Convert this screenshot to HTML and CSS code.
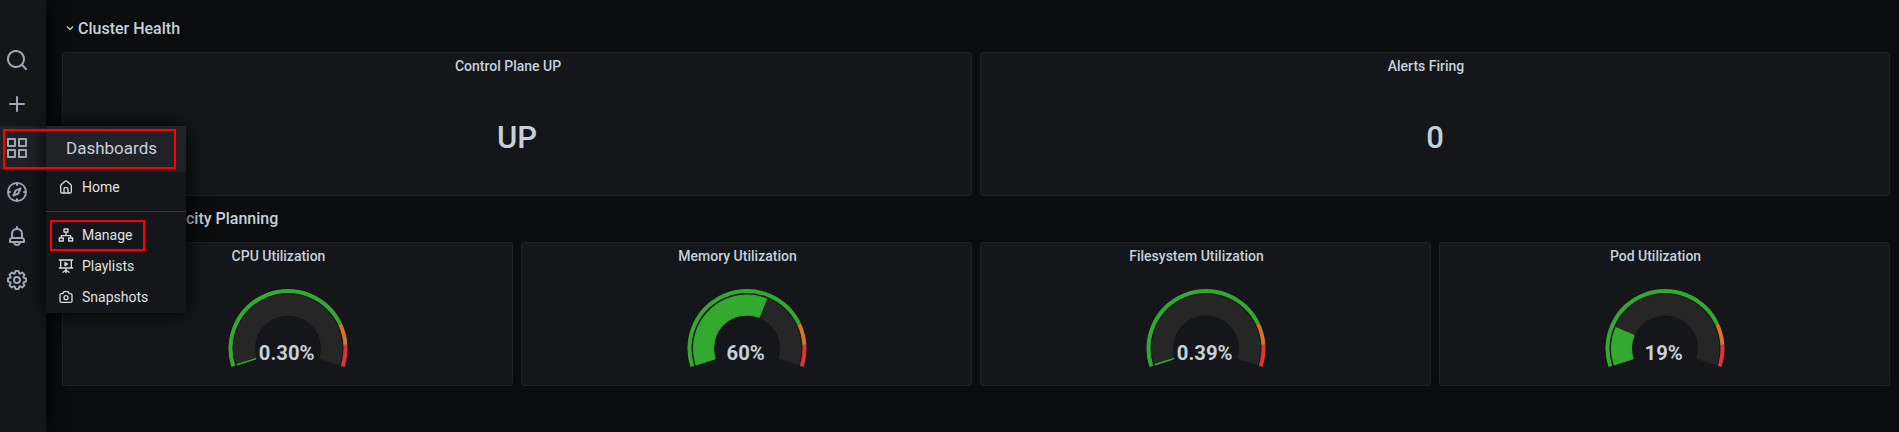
FILE: index.html
```html
<!DOCTYPE html>
<html lang="en">
<head>
<meta charset="utf-8">
<title>Cluster Health</title>
<link rel="stylesheet" href="styles.css">
</head>
<body>
<div class="app">
  <nav class="sidemenu">
    <a class="nav-item"><svg class="nav-icon" viewBox="0 0 24 24"><path d="M21.71,20.29,18,16.61A9,9,0,1,0,16.61,18l3.68,3.68a1,1,0,0,0,1.42,0A1,1,0,0,0,21.71,20.29ZM11,18a7,7,0,1,1,7-7A7,7,0,0,1,11,18Z"/></svg></a>
    <a class="nav-item"><svg class="nav-icon" viewBox="0 0 24 24"><path d="M19,11H13V5a1,1,0,0,0-2,0v6H5a1,1,0,0,0,0,2h6v6a1,1,0,0,0,2,0V13h6a1,1,0,0,0,0-2Z"/></svg></a>
    <div class="nav-item nav-item-open">
      <svg class="nav-icon" viewBox="0 0 24 24"><path d="M10,13H3a1,1,0,0,0-1,1v7a1,1,0,0,0,1,1h7a1,1,0,0,0,1-1V14A1,1,0,0,0,10,13ZM9,20H4V15H9ZM21,2H14a1,1,0,0,0-1,1v7a1,1,0,0,0,1,1h7a1,1,0,0,0,1-1V3A1,1,0,0,0,21,2ZM20,9H15V4h5Zm1,4H14a1,1,0,0,0-1,1v7a1,1,0,0,0,1,1h7a1,1,0,0,0,1-1V14A1,1,0,0,0,21,13Zm-1,7H15V15h5ZM10,2H3A1,1,0,0,0,2,3v7a1,1,0,0,0,1,1h7a1,1,0,0,0,1-1V3A1,1,0,0,0,10,2ZM9,9H4V4H9Z"/></svg>
      <div class="menu">
        <div class="menu-header">Dashboards</div>
        <a class="menu-item"><svg class="menu-icon" viewBox="0 0 24 24"><path d="M20,8h0L14,2.74a3,3,0,0,0-4,0L4,8a3,3,0,0,0-1,2.26V19a3,3,0,0,0,3,3H18a3,3,0,0,0,3-3V10.25A3,3,0,0,0,20,8ZM14,20H10V15a1,1,0,0,1,1-1h2a1,1,0,0,1,1,1Zm5-1a1,1,0,0,1-1,1H16V15a3,3,0,0,0-3-3H11a3,3,0,0,0-3,3v5H6a1,1,0,0,1-1-1V10.25a1,1,0,0,1,.34-.75l6-5.25a1,1,0,0,1,1.32,0l6,5.25a1,1,0,0,1,.34.75Z"/></svg>Home</a>
        <div class="menu-divider"></div>
        <a class="menu-item"><svg class="menu-icon menu-icon-line" viewBox="0 0 24 24"><path d="M9 3h6v4.500H9zM2 16.500h6V21H2zM16 16.500h6V21h-6zM12 7.500V13M5 16.500V13h14v3.500"/></svg>Manage<span class="mark mark-manage"></span></a>
        <a class="menu-item"><svg class="menu-icon menu-icon-line" viewBox="0 0 24 24"><path d="M2 3h20M4 3v12h16V3M2 15h20M12 15v7M12 18l-4.500 3.500M12 18l4.500 3.500M10.500 7v4.500l3.500-2.250z"/></svg>Playlists</a>
        <a class="menu-item"><svg class="menu-icon menu-icon-line" viewBox="0 0 24 24"><path d="M5 7h2.300l1-2.400a1 1 0 0 1 1-.6h5.400a1 1 0 0 1 1 .6l1 2.400H19a2 2 0 0 1 2 2v9a2 2 0 0 1-2 2H5a2 2 0 0 1-2-2V9a2 2 0 0 1 2-2z"/><circle cx="12" cy="13" r="3"/></svg>Snapshots</a>
      </div>
      <span class="mark mark-dashboards"></span>
    </div>
    <a class="nav-item"><svg class="nav-icon" viewBox="0 0 24 24"><path d="M12,2A10,10,0,1,0,22,12,10,10,0,0,0,12,2Zm1,17.930V19a1,1,0,0,0-2,0v.93A8,8,0,0,1,4.070,13H5a1,1,0,0,0,0-2H4.070A8,8,0,0,1,11,4.070V5a1,1,0,0,0,2,0V4.070A8,8,0,0,1,19.930,11H19a1,1,0,0,0,0,2h.93A8,8,0,0,1,13,19.930ZM15.140,7.550l-5,2.120a1,1,0,0,0-.52.52l-2.120,5a1,1,0,0,0,.21,1.100,1,1,0,0,0,.7.3.93.93,0,0,0,.4-.09l5-2.120a1,1,0,0,0,.52-.52l2.120-5a1,1,0,0,0-1.310-1.310Zm-2.490,5.100-2.280,1,1-2.280,2.280-1Z"/></svg></a>
    <a class="nav-item"><svg class="nav-icon" viewBox="0 0 24 24"><path d="M18,13.180V10a6,6,0,0,0-5-5.910V3a1,1,0,0,0-2,0V4.090A6,6,0,0,0,6,10v3.180A3,3,0,0,0,4,16v2a1,1,0,0,0,1,1H8.140a4,4,0,0,0,7.720,0H19a1,1,0,0,0,1-1V16A3,3,0,0,0,18,13.180ZM8,10a4,4,0,0,1,8,0v3H8Zm4,10a2,2,0,0,1-1.720-1h3.440A2,2,0,0,1,12,20Zm6-3H6V16a1,1,0,0,1,1-1H17a1,1,0,0,1,1,1Z"/></svg></a>
    <a class="nav-item"><svg class="nav-icon" viewBox="0 0 24 24"><path d="M21.320,9.550l-1.890-.63.89-1.780A1,1,0,0,0,20.130,6L18,3.870a1,1,0,0,0-1.150-.19l-1.780.89-.63-1.890A1,1,0,0,0,13.500,2h-3a1,1,0,0,0-.95.68L8.920,4.570,7.140,3.680A1,1,0,0,0,6,3.870L3.870,6a1,1,0,0,0-.19,1.150l.89,1.780-1.890.63A1,1,0,0,0,2,10.500v3a1,1,0,0,0,.68.95l1.890.63-.89,1.780A1,1,0,0,0,3.870,18L6,20.130a1,1,0,0,0,1.150.19l1.780-.89.63,1.890a1,1,0,0,0,.95.68h3a1,1,0,0,0,.95-.68l.63-1.890,1.780.89A1,1,0,0,0,18,20.130L20.130,18a1,1,0,0,0,.19-1.150l-.89-1.780,1.890-.63A1,1,0,0,0,22,13.500v-3A1,1,0,0,0,21.320,9.550ZM20,12.780l-1.200.4A2,2,0,0,0,17.640,16l.57,1.140-1.100,1.100L16,17.640a2,2,0,0,0-2.790,1.160l-.4,1.200H11.220l-.4-1.200A2,2,0,0,0,8,17.640l-1.140.57-1.100-1.100L6.360,16A2,2,0,0,0,5.200,13.180L4,12.780V11.220l1.200-.4A2,2,0,0,0,6.360,8L5.790,6.890l1.100-1.100L8,6.360A2,2,0,0,0,10.820,5.200l.4-1.200h1.560l.4,1.200A2,2,0,0,0,16,6.360l1.140-.57,1.100,1.100L17.640,8a2,2,0,0,0,1.160,2.790l1.200.4ZM12,8a4,4,0,1,0,4,4A4,4,0,0,0,12,8Zm0,6a2,2,0,1,1,2-2A2,2,0,0,1,12,14Z"/></svg></a>
  </nav>
  <main class="dashboard">
    <h2 class="row-title"><svg class="caret" viewBox="0 0 8 8"><path d="M1 2.500l3 3 3-3"/></svg>Cluster Health</h2>
    <div class="panels panels-stats">
      <section class="panel"><h3 class="panel-title">Control Plane UP</h3><div class="stat">UP</div></section>
      <section class="panel"><h3 class="panel-title">Alerts Firing</h3><div class="stat">0</div></section>
    </div>
    <h2 class="row-title"><svg class="caret" viewBox="0 0 8 8"><path d="M1 2.500l3 3 3-3"/></svg>Resource Capacity Planning</h2>
    <div class="panels panels-gauges">
      <section class="panel"><h3 class="panel-title">CPU Utilization</h3><div class="gauge" data-value="0.30"></div></section>
      <section class="panel"><h3 class="panel-title">Memory Utilization</h3><div class="gauge" data-value="60"></div></section>
      <section class="panel"><h3 class="panel-title">Filesystem Utilization</h3><div class="gauge" data-value="0.39"></div></section>
      <section class="panel"><h3 class="panel-title">Pod Utilization</h3><div class="gauge" data-value="19"></div></section>
    </div>
  </main>
</div>
<script src="gauge.js"></script>
</body>
</html>
```
FILE: styles.css
```css
* { box-sizing: border-box; }
body {
  margin: 0;
  background: #0b0c0e;
  color: #c7d0d9;
  font-family: Roboto, "Liberation Sans", sans-serif;
  font-size: 14px;
  overflow: hidden;
}
.app { display: flex; height: 432px; }

.sidemenu {
  position: relative;
  z-index: 2;
  flex: none;
  width: 46px;
  padding-top: 38px;
  background: #141619;
  box-shadow: 0 0 20px #000;
}
.nav-item { position: relative; display: flex; align-items: center; height: 44px; padding-left: 5px; }
.nav-item-open { background: #202226; }
.nav-icon { width: 24px; height: 24px; fill: #9fa7b3; }

.menu {
  position: absolute;
  left: 46px;
  top: 0;
  z-index: 1;
  width: 140px;
  background: #141619;
  box-shadow: 0 0 20px #000;
}
.menu-header {
  height: 46px;
  padding-left: 20px;
  background: #202226;
  font-size: 17px;
  line-height: 45px;
}
.menu-item {
  position: relative;
  display: flex;
  align-items: center;
  gap: 8px;
  height: 31px;
  padding: 0 0 1px 12px;
  color: #e0e1e2;
}
.menu-icon { width: 16px; height: 16px; fill: #d8d9da; }
.menu-icon-line { fill: none; stroke: #d8d9da; stroke-width: 2; stroke-linejoin: round; stroke-linecap: round; }
.menu-divider { height: 1px; margin: 8px 0; background: #34363b; }

.mark { position: absolute; z-index: 2; border: 2px solid #f00; }
.mark-dashboards { left: 3px; top: 3px; width: 173px; height: 40px; }
.mark-manage { left: 4px; top: 0; width: 95px; height: 31px; }

.dashboard { flex: 1; padding: 0 9px 0 16px; }
.row-title {
  display: flex;
  align-items: center;
  gap: 4px;
  height: 30px;
  margin: 0;
  padding-left: 4px;
  font-size: 16px;
  font-weight: 500;
}
.row-title:first-child { margin: 13px 0 9px; }
.panels + .row-title { margin: 7px 0 9px; }
.caret { width: 8px; height: 8px; fill: none; stroke: #c7d0d9; stroke-width: 1.3; }
.panels { display: grid; gap: 8px; }
.panels-stats { grid-template-columns: 1fr 1fr; }
.panels-gauges { grid-template-columns: repeat(4, 1fr); }
.panel {
  height: 144px;
  background: #141619;
  border: 1px solid #202226;
  border-radius: 3px;
}
.panel-title {
  height: 28px;
  margin: 0;
  padding-right: 18px;
  font-size: 14px;
  font-weight: 500;
  line-height: 27px;
  text-align: center;
}
.stat {
  height: 114px;
  font-size: 31px;
  font-weight: 500;
  line-height: 114px;
  text-align: center;
}
.gauge { display: flex; justify-content: center; padding-top: 15px; }
.gauge-svg { width: 124px; height: 84px; }
.gauge-value { fill: #c7d0d9; font-size: 20.3px; font-weight: 700; text-anchor: middle; }
.track { fill: #262626; }
.level { fill: #33a92f; stroke: #33a92f; }
.zone-ok { fill: #33a92f; }
.zone-warn { fill: #d67528; }
.zone-critical { fill: #e03333; }
```
FILE: gauge.js
```js
// Gauges sweep 216 degrees, from 198 to -18 degrees, around (62, 62.5).
const CX = 62, CY = 62.5;

function point(fraction, radius) {
  const angle = (198 - 216 * fraction) * Math.PI / 180;
  return (CX + radius * Math.cos(angle)).toFixed(2) + ' ' + (CY - radius * Math.sin(angle)).toFixed(2);
}

function band(name, from, to, inner, outer) {
  const large = (to - from) * 216 > 180 ? 1 : 0;
  return `<path class="${name}" d="M${point(from, outer)} A${outer} ${outer} 0 ${large} 1 ${point(to, outer)}` +
    ` L${point(to, inner)} A${inner} ${inner} 0 ${large} 0 ${point(from, inner)}Z"/>`;
}

document.querySelectorAll('.gauge').forEach((gauge) => {
  const label = gauge.dataset.value;
  const value = Number(label) / 100;
  gauge.innerHTML = '<svg class="gauge-svg" viewBox="0 0 124 84">' +
    band('track', 0, 1, 33, 54.5) +
    band('level', 0, value, 33.5, 53.5) +
    band('zone-ok', 0, 0.8, 55.5, 59.5) +
    band('zone-warn', 0.8, 0.9, 55.5, 59.5) +
    band('zone-critical', 0.9, 1, 55.5, 59.5) +
    `<text class="gauge-value" x="60.7" y="74.3">${label}%</text></svg>`;
});
```
